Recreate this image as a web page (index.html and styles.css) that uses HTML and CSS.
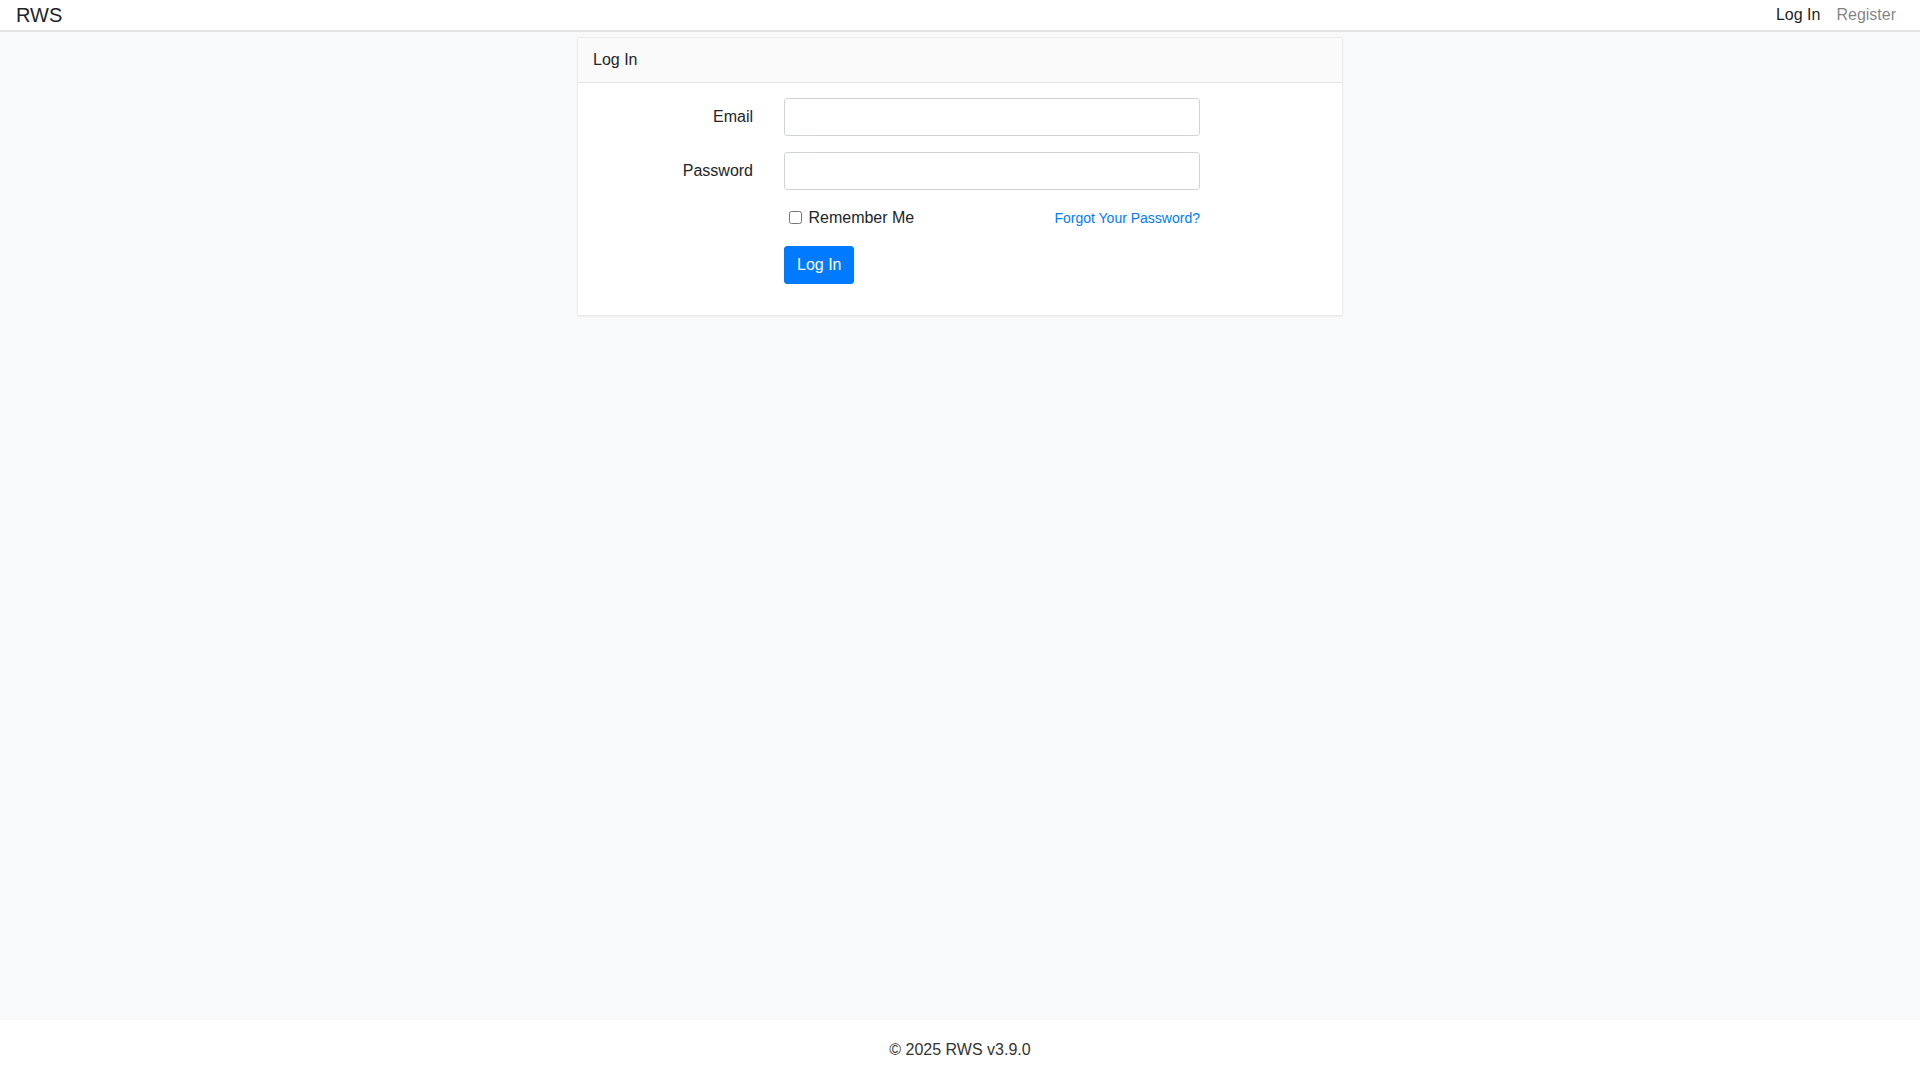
FILE: index.html
```html
<!DOCTYPE html>
<html lang="en">

<head>
    <meta charset="UTF-8">
    <meta name="viewport" content="width=device-width, initial-scale=1.0">
    <title>RWS - Log In</title>
    <link rel="stylesheet" href="styles.css">
</head>

<body>
    <nav class="navbar">
        <a class="brand" href="#">RWS</a>
        <div class="nav-links">
            <a class="nav-link active" href="#">Log In</a>
            <a class="nav-link" href="#">Register</a>
        </div>
    </nav>

    <main class="main">
        <div class="card">
            <div class="card-header">Log In</div>
            <div class="card-body">
                <form class="login-form">
                    <div class="form-row">
                        <label class="form-label" for="email">Email</label>
                        <input class="form-control" type="email" id="email" name="email">
                    </div>
                    <div class="form-row">
                        <label class="form-label" for="password">Password</label>
                        <input class="form-control" type="password" id="password" name="password">
                    </div>
                    <div class="form-row">
                        <span></span>
                        <div class="remember-row">
                            <label class="check-label"><input type="checkbox" name="remember"> Remember Me</label>
                            <a class="forgot" href="#">Forgot Your Password?</a>
                        </div>
                    </div>
                    <div class="form-row">
                        <span></span>
                        <div>
                            <button type="submit" class="btn-primary">Log In</button>
                        </div>
                    </div>
                </form>
            </div>
        </div>
    </main>

    <footer class="footer">&copy; 2025 RWS v3.9.0</footer>
</body>
</html>
```

FILE: styles.css
```css
html,
body {
    height: 100%;
}

body {
    margin: 0;
    display: flex;
    flex-direction: column;
    font-family: "Liberation Sans", Arial, sans-serif;
    font-size: 16px;
    color: #212529;
    background-color: #fff;
}

a {
    text-decoration: none;
}

.navbar {
    height: 30px;
    display: flex;
    justify-content: space-between;
    align-items: center;
    padding: 0 16px 0 16px;
    background-color: #fff;
    border-bottom: 2px solid #e2e3e5;
}

.brand {
    font-size: 20px;
    line-height: 30px;
    color: #212529;
}

.nav-links {
    display: flex;
}

.nav-link {
    padding: 0 8px;
    line-height: 30px;
    color: rgba(0, 0, 0, 0.5);
}

.nav-link.active {
    color: rgba(0, 0, 0, 0.9);
}

.main {
    flex: 1;
    background-color: #f8f9fa;
    padding-top: 5px;
}

.card {
    width: 764px;
    margin: 0 auto;
    background-color: #fff;
    border: 1px solid rgba(0, 0, 0, 0.07);
    border-radius: 3px;
    box-shadow: 0 1px 2px rgba(0, 0, 0, 0.06);
}

.card-header {
    padding: 10px 15px;
    line-height: 24px;
    background-color: #fafafa;
    border-bottom: 1px solid rgba(0, 0, 0, 0.08);
}

.card-body {
    padding: 15px 0 31px 0;
}

.login-form {
    display: flex;
    flex-direction: column;
    gap: 16px;
}

.form-row {
    display: grid;
    grid-template-columns: 175px 416px;
    column-gap: 31px;
    align-items: center;
}

.form-label {
    text-align: right;
    line-height: 38px;
}

.form-control {
    box-sizing: border-box;
    height: 38px;
    width: 100%;
    margin: 0;
    padding: 6px 12px;
    font-family: inherit;
    font-size: 16px;
    border: 1px solid #ced4da;
    border-radius: 3px;
    background-color: #fff;
}

.remember-row {
    display: flex;
    justify-content: space-between;
    align-items: baseline;
    line-height: 24px;
}

.check-label input {
    margin: 3px 2px 3px 5px;
    vertical-align: -1px;
}

.forgot {
    font-size: 14px;
    color: #007bff;
}

.btn-primary {
    padding: 6px 12px;
    font-family: inherit;
    font-size: 16px;
    line-height: 24px;
    color: #fff;
    background-color: #007bff;
    border: 1px solid #007bff;
    border-radius: 3px;
}

.footer {
    height: 60px;
    line-height: 60px;
    text-align: center;
    color: #333;
    background-color: #fff;
}
```
